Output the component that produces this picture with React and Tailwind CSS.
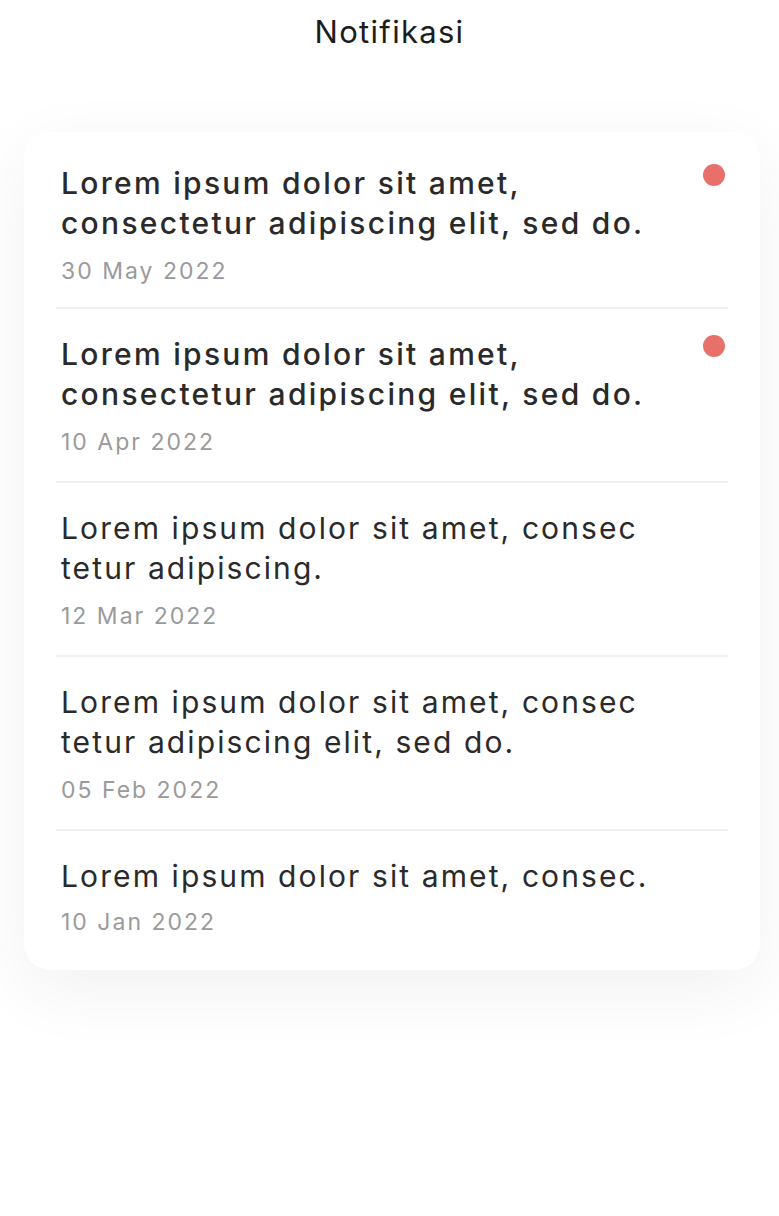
import React from 'react';

const NOTIFICATIONS = [
  {
    lines: ['Lorem ipsum dolor sit amet,', 'consectetur adipiscing elit, sed do.'],
    date: '30 May 2022',
    unread: true,
  },
  {
    lines: ['Lorem ipsum dolor sit amet,', 'consectetur adipiscing elit, sed do.'],
    date: '10 Apr 2022',
    unread: true,
  },
  {
    lines: ['Lorem ipsum dolor sit amet, consec', 'tetur adipiscing.'],
    date: '12 Mar 2022',
    unread: false,
  },
  {
    lines: ['Lorem ipsum dolor sit amet, consec', 'tetur adipiscing elit, sed do.'],
    date: '05 Feb 2022',
    unread: false,
  },
  {
    lines: ['Lorem ipsum dolor sit amet, consec.'],
    date: '10 Jan 2022',
    unread: false,
  },
];

function NotificationItem({ item, first, last }) {
  return (
    <li
      className={[
        'flex items-start justify-between',
        first ? 'pt-[31px]' : 'pt-[25px]',
        last
          ? 'pb-[33px]'
          : first
          ? 'pb-[21px] border-b-2 border-[#f0f0f0]'
          : 'pb-[24px] border-b-2 border-[#f0f0f0]',
      ].join(' ')}
    >
      <div className="pl-[5px]">
        <p
          className={[
            'text-[30px] leading-[40px] text-[#2a2a2a]',
            item.unread ? 'font-medium tracking-[2.3px]' : 'font-normal tracking-[2.1px]',
          ].join(' ')}
        >
          {item.lines.map((line, i) => (
            <span key={i} className="block whitespace-nowrap">
              {line}
            </span>
          ))}
        </p>
        <p
          className={[
            'text-[23px] leading-[30px] tracking-[2px] text-[#9a9a9a]',
            item.lines.length > 1 ? 'mt-[13px]' : 'mt-[11px]',
          ].join(' ')}
        >
          {item.date}
        </p>
      </div>

      {/* unread marker */}
      {item.unread && (
        <span className="mt-[1px] mr-[3px] w-[22px] h-[22px] rounded-full bg-[#e8706b] flex-shrink-0" />
      )}
    </li>
  );
}

export default function App() {
  return (
    <div
      className="min-h-[1216px] w-full bg-white"
      style={{ fontFamily: 'Inter, "Noto Sans", sans-serif' }}
    >
      <header className="pt-[13px] text-center">
        <h1 className="text-[31px] leading-[38px] font-normal text-[#1c1c1c] tracking-[1.3px]">
          Notifikasi
        </h1>
      </header>

      <main className="px-[24px] pt-[81px] pr-[19px]">
        <div className="rounded-[26px] bg-white px-[32px] shadow-[0_20px_70px_rgba(0,0,0,0.06)]">
          <ul>
            {NOTIFICATIONS.map((item, idx) => (
              <NotificationItem
                key={idx}
                item={item}
                first={idx === 0}
                last={idx === NOTIFICATIONS.length - 1}
              />
            ))}
          </ul>
        </div>
      </main>
    </div>
  );
}
